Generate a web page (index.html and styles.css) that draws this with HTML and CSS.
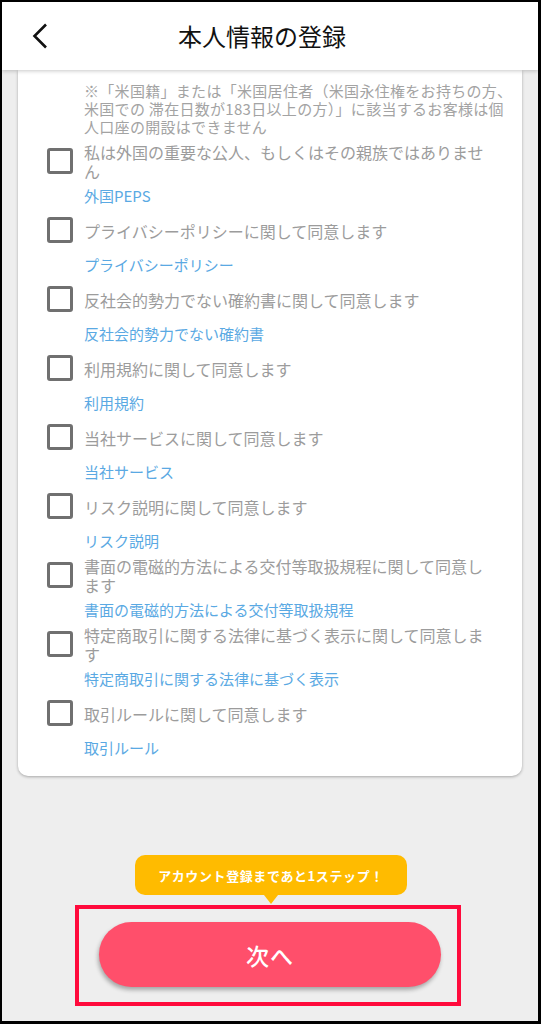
FILE: index.html
```html
<!DOCTYPE html>
<html lang="ja">
<head>
<meta charset="utf-8">
<title>本人情報の登録</title>
<link rel="stylesheet" href="styles.css">
</head>
<body>
<div class="screen">
  <header class="appbar">
    <button class="back" aria-label="戻る">
      <svg width="16" height="26" viewBox="0 0 16 26"><polyline points="14,1.5 2.5,13 14,24.5" fill="none" stroke="#111" stroke-width="2.6" stroke-linejoin="miter"/></svg>
    </button>
    <h1 class="title">本人情報の登録</h1>
  </header>
  <main class="content">
    <section class="card">
      <p class="note">※「米国籍」または「米国居住者（米国永住権をお持ちの方、米国での 滞在日数が183日以上の方）」に該当するお客様は個人口座の開設はできません</p>
      <ul class="agreements">
        <li class="agreement">
          <label class="row"><span class="checkbox"></span><span class="label">私は外国の重要な公人、もしくはその親族ではありません</span></label>
          <a class="link">外国PEPS</a>
        </li>
        <li class="agreement">
          <label class="row"><span class="checkbox"></span><span class="label">プライバシーポリシーに関して同意します</span></label>
          <a class="link">プライバシーポリシー</a>
        </li>
        <li class="agreement">
          <label class="row"><span class="checkbox"></span><span class="label">反社会的勢力でない確約書に関して同意します</span></label>
          <a class="link">反社会的勢力でない確約書</a>
        </li>
        <li class="agreement">
          <label class="row"><span class="checkbox"></span><span class="label">利用規約に関して同意します</span></label>
          <a class="link">利用規約</a>
        </li>
        <li class="agreement">
          <label class="row"><span class="checkbox"></span><span class="label">当社サービスに関して同意します</span></label>
          <a class="link">当社サービス</a>
        </li>
        <li class="agreement">
          <label class="row"><span class="checkbox"></span><span class="label">リスク説明に関して同意します</span></label>
          <a class="link">リスク説明</a>
        </li>
        <li class="agreement">
          <label class="row"><span class="checkbox"></span><span class="label">書面の電磁的方法による交付等取扱規程に関して同意します</span></label>
          <a class="link">書面の電磁的方法による交付等取扱規程</a>
        </li>
        <li class="agreement">
          <label class="row"><span class="checkbox"></span><span class="label">特定商取引に関する法律に基づく表示に関して同意します</span></label>
          <a class="link">特定商取引に関する法律に基づく表示</a>
        </li>
        <li class="agreement">
          <label class="row"><span class="checkbox"></span><span class="label">取引ルールに関して同意します</span></label>
          <a class="link">取引ルール</a>
        </li>
      </ul>
    </section>
  </main>
  <footer class="actions">
    <div class="tooltip">アカウント登録まであと1ステップ！</div>
    <div class="highlight">
      <button class="next">次へ</button>
    </div>
  </footer>
</div>
</body>
</html>
```

FILE: styles.css
```css
* { box-sizing: border-box; }

html, body {
  margin: 0;
  padding: 0;
}

body {
  font-family: "Noto Sans CJK JP", "Noto Sans", Roboto, sans-serif;
  background: #000;
}

.screen {
  width: 541px;
  height: 1024px;
  border-style: solid;
  border-color: #000;
  border-width: 2px 3px 3px 2px;
  background: #eeeeee;
  display: flex;
  flex-direction: column;
  overflow: hidden;
}

.appbar {
  position: relative;
  z-index: 2;
  height: 68px;
  flex: 0 0 68px;
  background: #fff;
  box-shadow: 0 1px 4px rgba(0, 0, 0, 0.22);
  display: flex;
  align-items: center;
}

.back {
  border: 0;
  background: none;
  padding: 0;
  margin-left: 30px;
  width: 16px;
  height: 26px;
  display: flex;
}

.title {
  flex: 1;
  margin: 0;
  padding-right: 62px;
  text-align: center;
  font-size: 24px;
  font-weight: 400;
  color: #111;
  line-height: 30px;
}

.content {
  flex: 0 0 auto;
}

.card {
  margin: 0 16px;
  background: #fff;
  border-radius: 0 0 10px 10px;
  box-shadow: 0 1px 3px rgba(0, 0, 0, 0.3);
  padding: 12px 0 13px 29px;
}

.note {
  margin: 0 0 0 37px;
  width: 430px;
  font-size: 15px;
  line-height: 18px;
  letter-spacing: 0.3px;
  color: #a3a3a3;
}

.agreements {
  list-style: none;
  margin: 6px 0 0;
  padding: 0;
}

.row {
  display: flex;
  align-items: center;
  gap: 11px;
  min-height: 40px;
}

.checkbox {
  flex: 0 0 26px;
  width: 26px;
  height: 26px;
  border: 3px solid #707070;
  border-radius: 3px;
  margin-top: -3px;
}

.label {
  width: 412px;
  font-size: 16px;
  line-height: 19px;
  color: #9c9c9c;
}

.link {
  display: block;
  margin-left: 37px;
  padding: 4px 0 5px;
  font-size: 15px;
  line-height: 20px;
  color: #5aa9e3;
}

.actions {
  flex: 1;
  display: flex;
  flex-direction: column;
  align-items: center;
}

.tooltip {
  position: relative;
  margin-top: 79px;
  width: 272px;
  height: 40px;
  margin-left: 2px;
  border-radius: 10px;
  background: #ffbb00;
  color: #fff;
  font-size: 13px;
  font-weight: 700;
  letter-spacing: 0.6px;
  display: flex;
  align-items: center;
  justify-content: center;
}

.tooltip::after {
  content: "";
  position: absolute;
  left: 50%;
  bottom: -9px;
  margin-left: -7px;
  border-left: 7px solid transparent;
  border-right: 7px solid transparent;
  border-top: 9px solid #ffbb00;
}

.highlight {
  margin-top: 10px;
  margin-right: 4px;
  width: 386px;
  height: 101px;
  border: 4px solid #ff0a3c;
  padding: 13px 0 0 20px;
}

.next {
  width: 342px;
  height: 65px;
  border: 0;
  border-radius: 33px;
  background: #ff4f6b;
  box-shadow: -1px 3px 4px rgba(0, 0, 0, 0.3);
  color: #fff;
  font-family: "Noto Sans CJK JP", sans-serif;
  font-size: 23px;
  font-weight: 500;
  letter-spacing: 1px;
}
```
